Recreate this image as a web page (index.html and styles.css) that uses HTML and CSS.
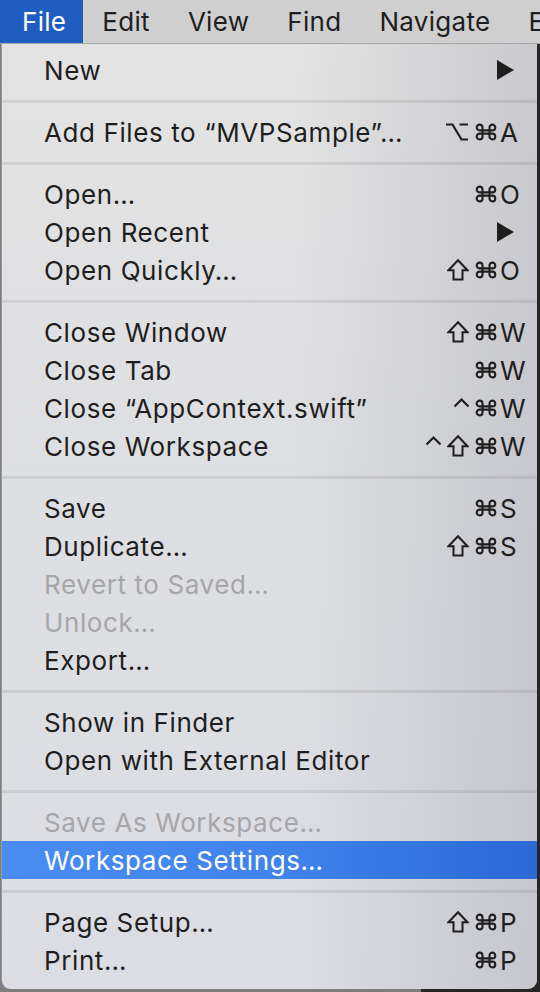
FILE: index.html
```html
<!DOCTYPE html>
<html>
<head>
<meta charset="utf-8">
<link rel="stylesheet" href="styles.css">
</head>
<body>
<svg width="0" height="0" class="defs">
  <defs>
    <symbol id="cmd" viewBox="0 0 22 22"><path d="M14.5 6.5v9a2.9 2.9 0 1 0 2.9-2.9H4.6a2.9 2.9 0 1 0 2.9 2.9v-9a2.9 2.9 0 1 0-2.9 2.9h12.8a2.9 2.9 0 1 0-2.9-2.9" fill="none" stroke="currentColor" stroke-width="2.1"/></symbol>
    <symbol id="shift" viewBox="0 0 22 24"><path d="M11 2.2 20.5 12.2h-5v9.3h-9v-9.3h-5z" fill="none" stroke="currentColor" stroke-width="2" stroke-linejoin="miter"/></symbol>
    <symbol id="opt" viewBox="0 0 24 22"><path d="M1 3.5h6.5l9 15h6.5M14.5 3.5h8.5" fill="none" stroke="currentColor" stroke-width="2.2"/></symbol>
    <symbol id="ctrl" viewBox="0 0 17 24"><path d="M1.5 10.5 8.5 3.5 15.5 10.5" fill="none" stroke="currentColor" stroke-width="2.2"/></symbol>
  </defs>
</svg>
<div class="menubar">
  <span class="mb-item active">File</span>
  <span class="mb-item">Edit</span>
  <span class="mb-item">View</span>
  <span class="mb-item">Find</span>
  <span class="mb-item">Navigate</span>
  <span class="mb-item">Editor</span>
</div>
<div class="menu">
  <div class="row"><span class="label">New</span><span class="keys"><span class="key"><span class="arrow"></span></span></span></div>
  <div class="sep"></div>
  <div class="row"><span class="label">Add Files to “MVPSample”…</span><span class="keys"><span class="mods"><svg class="m-opt"><use href="#opt"/></svg><svg class="m-cmd"><use href="#cmd"/></svg></span><span class="key">A</span></span></div>
  <div class="sep"></div>
  <div class="row"><span class="label">Open…</span><span class="keys"><span class="mods"><svg class="m-cmd"><use href="#cmd"/></svg></span><span class="key">O</span></span></div>
  <div class="row"><span class="label">Open Recent</span><span class="keys"><span class="key"><span class="arrow"></span></span></span></div>
  <div class="row"><span class="label">Open Quickly…</span><span class="keys"><span class="mods"><svg class="m-shift"><use href="#shift"/></svg><svg class="m-cmd"><use href="#cmd"/></svg></span><span class="key">O</span></span></div>
  <div class="sep"></div>
  <div class="row"><span class="label">Close Window</span><span class="keys"><span class="mods"><svg class="m-shift"><use href="#shift"/></svg><svg class="m-cmd"><use href="#cmd"/></svg></span><span class="key">W</span></span></div>
  <div class="row"><span class="label">Close Tab</span><span class="keys"><span class="mods"><svg class="m-cmd"><use href="#cmd"/></svg></span><span class="key">W</span></span></div>
  <div class="row"><span class="label">Close “AppContext.swift”</span><span class="keys"><span class="mods"><svg class="m-ctrl"><use href="#ctrl"/></svg><svg class="m-cmd"><use href="#cmd"/></svg></span><span class="key">W</span></span></div>
  <div class="row"><span class="label">Close Workspace</span><span class="keys"><span class="mods"><svg class="m-ctrl"><use href="#ctrl"/></svg><svg class="m-shift"><use href="#shift"/></svg><svg class="m-cmd"><use href="#cmd"/></svg></span><span class="key">W</span></span></div>
  <div class="sep"></div>
  <div class="row"><span class="label">Save</span><span class="keys"><span class="mods"><svg class="m-cmd"><use href="#cmd"/></svg></span><span class="key">S</span></span></div>
  <div class="row"><span class="label">Duplicate…</span><span class="keys"><span class="mods"><svg class="m-shift"><use href="#shift"/></svg><svg class="m-cmd"><use href="#cmd"/></svg></span><span class="key">S</span></span></div>
  <div class="row disabled"><span class="label">Revert to Saved…</span></div>
  <div class="row disabled"><span class="label">Unlock…</span></div>
  <div class="row"><span class="label">Export…</span></div>
  <div class="sep"></div>
  <div class="row"><span class="label">Show in Finder</span></div>
  <div class="row"><span class="label">Open with External Editor</span></div>
  <div class="sep"></div>
  <div class="row disabled"><span class="label">Save As Workspace…</span></div>
  <div class="row selected"><span class="label">Workspace Settings…</span></div>
  <div class="sep"></div>
  <div class="row"><span class="label">Page Setup…</span><span class="keys"><span class="mods"><svg class="m-shift"><use href="#shift"/></svg><svg class="m-cmd"><use href="#cmd"/></svg></span><span class="key">P</span></span></div>
  <div class="row"><span class="label">Print…</span><span class="keys"><span class="mods"><svg class="m-cmd"><use href="#cmd"/></svg></span><span class="key">P</span></span></div>
</div>
</body>
</html>
```
FILE: styles.css
```css
html, body {
  margin: 0;
  padding: 0;
}
body {
  width: 540px;
  height: 992px;
  overflow: hidden;
  background: linear-gradient(to right, #7d7d7d 0%, #7d7d7d 78%, #262626 78%, #262626 100%);
  font-family: Inter, "Noto Sans", "Liberation Sans", sans-serif;
  color: #1e1e1e;
}
.defs {
  position: absolute;
  width: 0;
  height: 0;
  overflow: hidden;
}
.menubar {
  height: 43px;
  background: #cfcfcf;
  border-bottom: 1px solid #a8a8a8;
  display: flex;
  align-items: stretch;
  white-space: nowrap;
  overflow: hidden;
  font-size: 26px;
  letter-spacing: 0.3px;
}
.mb-item {
  display: flex;
  align-items: center;
  padding: 0 19px;
}
.mb-item.active {
  background: #1f5dc0;
  color: #ffffff;
  padding: 0 17px 0 22px;
}
.menu {
  width: 535px;
  margin-left: 1px;
  border-left: 1px solid #9a9a9a;
  padding: 7px 0 10px 0;
  background:
    linear-gradient(to right, rgba(228,228,230,0) 0%, rgba(228,228,230,0) 55%, rgba(180,181,188,0.55) 100%),
    linear-gradient(to bottom, #e3e3e3 0%, #dedfe2 45%, #dcdde3 100%);
  border-radius: 0 0 9px 9px;
  font-size: 26px;
  letter-spacing: 0.6px;
}
.row {
  height: 38px;
  display: flex;
  align-items: center;
  padding-left: 42px;
  white-space: nowrap;
}
.label {
  flex: 1;
}
.row.disabled {
  color: #a6a6aa;
}
.row.selected {
  background: linear-gradient(to right, #4a8df1 0%, #3f82ea 55%, #2a69d6 100%);
  color: #ffffff;
}
.sep {
  height: 24px;
  display: flex;
  align-items: center;
}
.sep::before {
  content: "";
  display: block;
  width: 100%;
  height: 3px;
  background: rgba(0, 0, 0, 0.075);
}
.keys {
  display: flex;
  align-items: center;
}
.mods {
  display: flex;
  align-items: center;
  gap: 6px;
  margin-right: 3px;
  color: #1e1e1e;
}
.mods svg {
  display: block;
}
.m-cmd {
  width: 22px;
  height: 22px;
}
.m-shift {
  width: 22px;
  height: 24px;
}
.m-opt {
  width: 24px;
  height: 22px;
}
.m-ctrl {
  width: 17px;
  height: 24px;
  margin-right: -1px;
}
.key {
  width: 37px;
  text-align: left;
  letter-spacing: 0;
}
.arrow {
  display: block;
  width: 0;
  height: 0;
  margin-left: -3px;
  border-left: 17px solid #1e1e1e;
  border-top: 10px solid transparent;
  border-bottom: 10px solid transparent;
}
```
